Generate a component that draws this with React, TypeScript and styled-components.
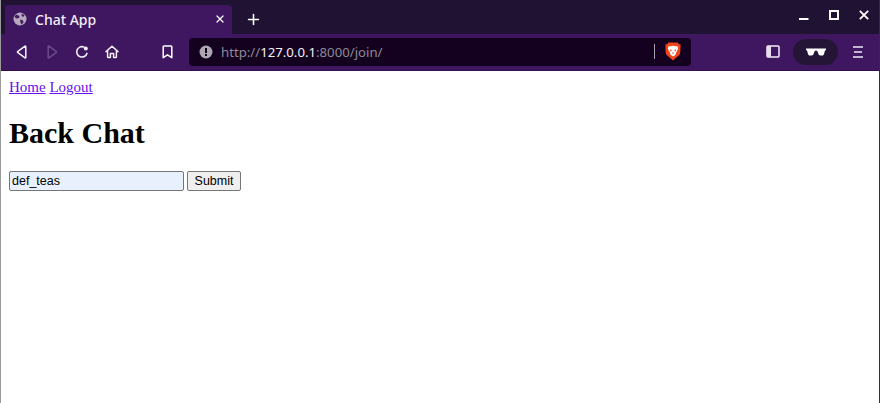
import styled, { createGlobalStyle } from 'styled-components';
import { Plus, X } from 'lucide-react';

const GlobalStyle = createGlobalStyle`
  html, body {
    margin: 0;
    padding: 0;
    height: 100%;
    background: #ffffff;
  }

  #root {
    height: 100%;
  }
`;

function App() {
  return (
    <>
      <GlobalStyle />
      <Window>
        <TabStrip>
          <Tab>
            <GlobeIcon />
            <TabTitle>Chat App</TabTitle>
            <TabClose>
              <X size={12} strokeWidth={2.4} />
            </TabClose>
          </Tab>
          <NewTab>
            <Plus size={17} strokeWidth={2.2} />
          </NewTab>
          <WindowControls>
            <MinimizeIcon />
            <MaximizeIcon />
            <CloseIcon />
          </WindowControls>
        </TabStrip>
        <Toolbar>
          <NavGroup>
            <NavButton>
              <BackIcon />
            </NavButton>
            <NavButton $disabled>
              <ForwardIcon />
            </NavButton>
            <NavButton>
              <ReloadIcon />
            </NavButton>
            <NavButton>
              <HomeIcon />
            </NavButton>
          </NavGroup>
          <BookmarkButton>
            <BookmarkIcon />
          </BookmarkButton>
          <AddressBar>
            <InfoIcon />
            <Url>
              http://<strong>127.0.0.1</strong>:8000/join/
            </Url>
            <Divider />
            <BraveIcon />
          </AddressBar>
          <SidebarButton>
            <SidebarIcon />
          </SidebarButton>
          <PrivatePill>
            <GlassesIcon />
          </PrivatePill>
          <MenuButton>
            <MenuIcon />
          </MenuButton>
        </Toolbar>
        <Page>
          <Nav>
            <PageLink href="#home">Home</PageLink> <PageLink href="#logout">Logout</PageLink>
          </Nav>
          <Heading>Back Chat</Heading>
          <JoinForm onSubmit={(e) => e.preventDefault()}>
            <NameInput defaultValue="def_teas" />
            <SubmitButton type="submit">Submit</SubmitButton>
          </JoinForm>
        </Page>
      </Window>
    </>
  );
}

export default App;

function GlobeIcon() {
  return (
    <svg width="14" height="14" viewBox="0 0 14 14">
      <circle cx="7" cy="7" r="6.5" fill="#b4a9bd" />
      <path d="M3 2.5 6.5 4 6 6 3.5 6.5 1.5 5ZM7 7.5l3 1 .5 2-2 2-1-2ZM9 1.5l2.5 2L10 5 8.5 3.5Z" fill="#46195f" />
    </svg>
  );
}

function MinimizeIcon() {
  return (
    <svg width="10" height="10" viewBox="0 0 10 10">
      <path d="M0 9h9.5" stroke="#fff" strokeWidth="2" />
    </svg>
  );
}

function MaximizeIcon() {
  return (
    <svg width="10" height="10" viewBox="0 0 10 10">
      <rect x="1" y="1" width="8" height="8" fill="none" stroke="#fff" strokeWidth="2" />
    </svg>
  );
}

function CloseIcon() {
  return (
    <svg width="10" height="10" viewBox="0 0 10 10">
      <path d="M.8.8l8.4 8.4M9.2.8.8 9.2" stroke="#fff" strokeWidth="1.8" />
    </svg>
  );
}

function BackIcon() {
  return (
    <svg width="12" height="14" viewBox="0 0 12 14">
      <path d="M9.8 1.5v11a.5.5 0 0 1-.8.4L1.6 7.4a.5.5 0 0 1 0-.8L9 1.1a.5.5 0 0 1 .8.4Z" fill="none" stroke="currentColor" strokeWidth="1.5" strokeLinejoin="round" />
    </svg>
  );
}

function ForwardIcon() {
  return (
    <svg width="12" height="14" viewBox="0 0 12 14">
      <path d="M2.2 1.5v11a.5.5 0 0 0 .8.4l7.4-5.5a.5.5 0 0 0 0-.8L3 1.1a.5.5 0 0 0-.8.4Z" fill="none" stroke="currentColor" strokeWidth="1.5" strokeLinejoin="round" />
    </svg>
  );
}

function ReloadIcon() {
  return (
    <svg width="14" height="14" viewBox="0 0 14 14">
      <path d="M11.9 8.4A5.2 5.2 0 1 1 8.8 2" fill="none" stroke="currentColor" strokeWidth="1.6" strokeLinecap="round" />
      <circle cx="10.8" cy="3.4" r="2" fill="currentColor" />
    </svg>
  );
}

function HomeIcon() {
  return (
    <svg width="14" height="14" viewBox="0 0 14 14">
      <path d="M1 6.6 7 1.2l6 5.4M2.6 5.6v6.2c0 .5.3.8.8.8h2V8.6h3.2v4h2c.5 0 .8-.3.8-.8V5.6" fill="none" stroke="currentColor" strokeWidth="1.5" strokeLinecap="round" strokeLinejoin="round" />
    </svg>
  );
}

function BookmarkIcon() {
  return (
    <svg width="11" height="14" viewBox="0 0 11 14">
      <path d="M1.2 1.8c0-.4.3-.8.8-.8h7c.5 0 .8.4.8.8v10.9L5.5 9.8l-4.3 2.9Z" fill="none" stroke="#fff" strokeWidth="1.5" strokeLinejoin="round" />
    </svg>
  );
}

function InfoIcon() {
  return (
    <svg width="14" height="14" viewBox="0 0 14 14">
      <circle cx="7" cy="7" r="6.5" fill="#aca5b2" />
      <rect x="6" y="3" width="2" height="5" fill="#12001f" />
      <rect x="6" y="9" width="2" height="2" fill="#12001f" />
    </svg>
  );
}

function BraveIcon() {
  return (
    <svg width="16" height="19" viewBox="0 0 16 19">
      <path d="M3.4.6h9.2l1.4 1.6 1.6.4-.3 7.6c-.2 2-.9 3-2.2 3.9L8 18.6l-5.1-4.5C1.6 13.2.9 12.2.7 10.2L.4 2.6 2 2.2Z" fill="#f1431c" />
      <path d="M3.3 4.4 8 3.7l4.7.7.4 2.4-1.9 3.600-.9 2.500L8 14.4l-2.300-1.500-.9-2.500-1.900-3.600Z" fill="#fff" />
      <path d="M4.9 7.2 7 8.300 5.500 9.400ZM11.100 7.200 9 8.300l1.500 1.100ZM7 10.400h2L8 12.300Z" fill="#f1431c" />
    </svg>
  );
}

function SidebarIcon() {
  return (
    <svg width="14" height="13" viewBox="0 0 14 13">
      <rect x="1" y="1" width="12" height="11" rx="1" fill="none" stroke="#f2eef5" strokeWidth="1.5" />
      <rect x="1" y="1" width="4" height="11" fill="#e6deec" />
    </svg>
  );
}

function GlassesIcon() {
  return (
    <svg width="20" height="8" viewBox="0 0 20 8">
      <path d="M0 .4h20v1.600l-1 .4-1 3.500c-.2.9-.8 1.500-1.700 1.500h-2.100c-.9 0-1.500-.5-1.800-1.300L11.300 3c-.3-.7-2.300-.7-2.600 0L7.600 6.100c-.3.8-.9 1.300-1.800 1.300H3.700C2.800 7.400 2.200 6.800 2 5.900L1 2.400 0 2Z" fill="#fff" />
    </svg>
  );
}

function MenuIcon() {
  return (
    <svg width="10" height="12" viewBox="0 0 10 12">
      <path d="M0 1h10M1 6h8M0 11h10" stroke="#efe9f3" strokeWidth="1.5" />
    </svg>
  );
}

const Window = styled.div`
  height: 100%;
  display: flex;
  flex-direction: column;
  border-left: 1px solid #9a9a9a;
  border-right: 1px solid #26323c;
  box-sizing: border-box;
  overflow: hidden;
`;

const TabStrip = styled.div`
  height: 34px;
  flex: none;
  display: flex;
  align-items: flex-end;
  padding-left: 4px;
  background: #1f1233;
`;

const Tab = styled.div`
  width: 227px;
  height: 29px;
  display: flex;
  align-items: center;
  box-sizing: border-box;
  padding: 0 4px 1px 8px;
  background: #3f1660;
  border-radius: 4px 4px 0 0;
`;

const TabTitle = styled.span`
  flex: 1;
  margin-left: 8px;
  font: 500 14px 'Noto Sans', sans-serif;
  color: #f3eef6;
`;

const TabClose = styled.span`
  width: 16px;
  height: 16px;
  display: flex;
  align-items: center;
  justify-content: center;
  color: #ffffff;
`;

const NewTab = styled.span`
  width: 42px;
  height: 29px;
  display: flex;
  align-items: center;
  justify-content: center;
  color: #ffffff;
`;

const WindowControls = styled.div`
  margin-left: auto;
  align-self: stretch;
  display: flex;
  align-items: center;
  gap: 20px;
  padding: 0 10px 4px 0;
`;

const Toolbar = styled.div`
  height: 37px;
  flex: none;
  display: flex;
  align-items: center;
  box-sizing: border-box;
  padding-bottom: 1px;
  background: #3f1660;
  border-bottom: 1px solid #32104e;
`;

const NavGroup = styled.div`
  display: flex;
  align-items: center;
  gap: 15px;
  padding-left: 13px;
`;

const NavButton = styled.span<{ $disabled?: boolean }>`
  width: 15px;
  height: 16px;
  display: flex;
  align-items: center;
  justify-content: center;
  color: ${({ $disabled }) => ($disabled ? '#6c4a8a' : '#f4f0f7')};
`;

const BookmarkButton = styled.span`
  display: flex;
  margin-left: 43px;
`;

const AddressBar = styled.div`
  width: 502px;
  height: 28px;
  margin-left: 16px;
  display: flex;
  align-items: center;
  box-sizing: border-box;
  padding: 0 10px;
  background: #13011f;
  border-radius: 4px;
`;

const Url = styled.span`
  flex: 1;
  margin-left: 8px;
  font: 400 13.2px 'Noto Sans', sans-serif;
  color: #8f8896;

  strong {
    font-weight: 400;
    color: #f4f1f6;
  }
`;

const Divider = styled.span`
  width: 1px;
  height: 15px;
  margin-right: 10px;
  background: #a9a3ae;
`;

const SidebarButton = styled.span`
  display: flex;
  margin-left: 75px;
`;

const PrivatePill = styled.span`
  width: 45px;
  height: 26px;
  margin-left: 13px;
  display: flex;
  align-items: center;
  justify-content: center;
  border-radius: 13px;
  background: #241536;
`;

const MenuButton = styled.span`
  display: flex;
  margin-left: 15px;
`;

const Page = styled.main`
  flex: 1;
  padding: 7.5px 8px;
  background: #ffffff;
  font-family: 'Liberation Serif', serif;
  font-size: 15px;
  color: #000000;
`;

const Nav = styled.nav`
  line-height: 17px;
`;

const PageLink = styled.a`
  color: #6610f2;
`;

const Heading = styled.h1`
  margin: 19px 0 21px;
  font-size: 30px;
  line-height: 35px;
  font-weight: 700;
`;

const JoinForm = styled.form`
  display: flex;
  align-items: center;
  gap: 3px;
`;

const NameInput = styled.input`
  width: 175px;
  height: 20px;
  box-sizing: border-box;
  padding: 1px 2px;
  border: 1px solid #767676;
  border-radius: 2px;
  background: #e8f0fe;
  font: 12.5px 'Liberation Sans', Arial, sans-serif;
  color: #000000;
`;

const SubmitButton = styled.button`
  width: 54px;
  height: 20px;
  box-sizing: border-box;
  padding: 1px 6px;
  border: 1px solid #767676;
  border-radius: 2px;
  background: #efefef;
  font: 12.5px 'Liberation Sans', Arial, sans-serif;
  color: #000000;
`;
